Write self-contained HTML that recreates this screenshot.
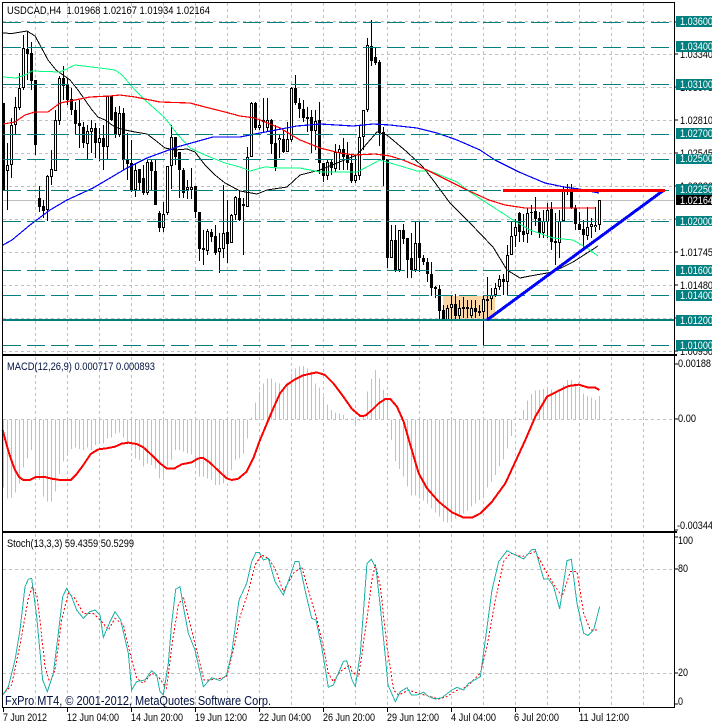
<!DOCTYPE html>
<html><head><meta charset="utf-8"><style>
html,body{margin:0;padding:0;background:#fff}
svg{display:block}
text{font-family:"Liberation Sans",sans-serif;font-size:11px;fill:#000}
.c{shape-rendering:crispEdges;fill:none}
</style></head><body>
<svg width="712" height="725" viewBox="0 0 712 725" xmlns="http://www.w3.org/2000/svg">
<rect width="712" height="725" fill="#fff"/>
<rect x="443" y="296" width="52" height="24" fill="#fad7a4" class="c" style="fill:#fad7a4"/>
<g class="c" stroke="#c0c0c0" stroke-dasharray="3 3">
<path d="M35.5 3V354M67.5 3V354M99.5 3V354M131.5 3V354M163.5 3V354M195.5 3V354M227.5 3V354M259.5 3V354M291.5 3V354M323.5 3V354M355.5 3V354M387.5 3V354M419.5 3V354M451.5 3V354M483.5 3V354M515.5 3V354M547.5 3V354M579.5 3V354M611.5 3V354M643.5 3V354"/>
<path d="M35.5 357V531M67.5 357V531M99.5 357V531M131.5 357V531M163.5 357V531M195.5 357V531M227.5 357V531M259.5 357V531M291.5 357V531M323.5 357V531M355.5 357V531M387.5 357V531M419.5 357V531M451.5 357V531M483.5 357V531M515.5 357V531M547.5 357V531M579.5 357V531M611.5 357V531M643.5 357V531"/>
<path d="M35.5 534V707M67.5 534V707M99.5 534V707M131.5 534V707M163.5 534V707M195.5 534V707M227.5 534V707M259.5 534V707M291.5 534V707M323.5 534V707M355.5 534V707M387.5 534V707M419.5 534V707M451.5 534V707M483.5 534V707M515.5 534V707M547.5 534V707M579.5 534V707M611.5 534V707M643.5 534V707"/>
<path d="M3 21.5H674M3 54.5H674M3 87.5H674M3 120.5H674M3 153.5H674M3 186.5H674M3 219.5H674M3 252.5H674M3 285.5H674M3 318.5H674M3 351.5H674M3 419.5H674M3 569.5H674M3 673.5H674"/>
</g>
<path class="c" stroke="#c0c0c0" d="M3 200.5H674"/>

<g class="c" transform="translate(.5,0)" stroke="#000">
<path stroke-width="1" d="M3 103V190M7 143V210M11 118V178M15 97V135M19 73V110M23 35V90M27 31V80M31 42V90M35 80V155M39 186V212M43 200V218M47 175V221M51 150V185M55 110V171M59 76V125M63 66V100M67 78V105M71 88V115M75 102V135M79 100V148M83 122V148M87 125V159M91 120V153M95 123V158M99 128V161M103 125V170M107 96V160M111 96V121M115 107V138M119 106V137M123 108V170M127 133V180M131 140V192M135 164V197M139 169V190M143 165V195M147 160V195M151 160V190M155 160V205M159 211V232M163 202V232M167 166V215M171 125V189M175 137V165M179 152V198M183 168V198M187 180V199M191 168V199M195 186V218M199 212V261M203 230V265M207 229V255M211 229V242M215 225V255M219 233V273M223 185V258M227 200V263M231 214V243M235 196V220M239 190V221M243 198V255M247 147V207M251 102V157M255 102V130M259 120V130M263 98V132M267 98V132M271 119V154M275 125V171M279 135V158M283 130V153M287 122V152M291 87V142M295 75V105M299 98V118M303 100V122M307 107V132M311 110V153M315 110V150M319 102V174M323 163V182M327 160V180M331 160V175M335 144V172M339 145V170M343 138V170M347 142V170M351 155V183M355 156V183M359 125V180M363 110V150M367 38V112M371 20V66M375 47V65M379 60V146M383 127V186M387 159V268M391 225V258M395 225V272M399 230V272M403 224V244M407 238V278M411 233V278M415 221V272M419 221V272M423 255V265M427 258V282M431 262V296M435 286V298M439 285V320M443 305V320M447 305V320M451 296V320M455 294V320M459 300V320M463 297V318M467 300V318M471 300V318M475 300V318M479 305V316M483 295V346M487 277V318M491 288V310M495 283V297M499 275V290M503 274V295M507 245V296M511 222V255M515 219V247M519 212V242M523 214V242M527 208V243M531 205V235M535 197V226M539 212V238M543 210V238M547 203V238M551 202V250M555 213V265M559 210V258M563 186V222M567 184V195M571 184V209M575 205V230M579 212V230M583 220V250M587 207V240M591 218V238M595 207V232M599 200V230"/>
<path stroke-width="3" d="M3 103V190M7 165V171M11 125V165M15 107V125M19 88V108M23 48V88M27 49V54M31 53V81M35 80V145M39 198V207M43 206V211M47 176V210M51 169V177M55 120V171M59 78V121M63 78V86M67 84V100M71 99V110M75 110V124M79 123V126M83 127V143M87 131V144M91 128V132M95 128V143M99 138V143M103 138V147M107 96V147M111 96V120M115 112V135M119 113V135M123 113V160M127 159V164M131 163V190M135 170V190M139 169V183M143 178V193M147 162V193M151 162V171M155 171V205M159 213V228M163 214V228M167 166V213M171 137V166M175 137V157M179 152V170M183 170V193M187 187V190M191 187V190M195 186V212M199 212V249M203 248V250M207 231V251M211 232V237M215 236V253M219 248V252M223 233V249M227 232V244M231 215V243M235 197V215M239 198V220M243 204V206M247 157V207M251 103V157M255 103V128M259 125V128M263 120V122M267 120V128M271 120V144M275 143V167M279 138V140M283 139V152M287 139V152M291 88V140M295 88V103M299 103V109M303 109V118M307 117V119M311 117V131M315 121V131M319 120V163M323 163V176M327 162V176M331 162V168M335 152V169M339 149V153M343 149V157M347 155V163M351 163V181M355 175V181M359 137V176M363 110V137M367 45V110M371 46V61M375 57V63M379 62V133M383 132V160M387 159V258M391 240V258M395 240V270M399 230V270M403 230V239M407 238V260M411 258V270M415 243V270M419 243V258M423 258V262M427 262V274M431 274V288M435 287V289M439 289V311M443 310V320M447 308V320M451 304V308M455 304V316M459 308V316M463 307V309M467 307V309M471 308V316M475 308V312M479 311V313M483 299V312M487 299V301M491 295V299M495 288V295M499 279V287M503 279V282M507 255V282M511 236V255M515 227V236M519 213V232M523 231V235M527 213V234M531 212V213M535 211V219M539 218V233M543 221V233M547 210V222M551 209V242M555 241V243M559 221V243M563 190V221M567 189V192M571 189V208M575 208V224M579 224V230M583 229V235M587 227V236M591 224V227M595 225V227M599 200V225"/>
<path stroke="#fff" stroke-width="1" d="M7 166V170M11 126V164M15 108V124M19 89V107M23 49V87M47 177V209M51 170V176M55 121V170M59 79V120M87 132V143M91 129V131M99 139V142M107 97V146M119 114V134M135 171V189M147 163V192M163 215V227M167 167V212M171 138V165M187 188V189M191 188V189M207 232V250M219 249V251M223 234V248M231 216V242M235 198V214M247 158V206M251 104V156M259 126V127M267 121V127M279 139V139.9M287 140V151M291 89V139M315 122V130M327 163V175M335 153V168M339 150V152M355 176V180M359 138V175M363 111V136M367 46V109M391 241V257M399 231V269M415 244V269M447 309V319M451 305V307M459 309V315M471 309V315M483 300V311M491 296V298M495 289V294M499 280V286M507 256V281M511 237V254M515 228V235M527 214V233M543 222V232M547 211V221M559 222V242M563 191V220M567 190V191M587 228V235M591 225V226M595 226V226.9M599 201V224"/>
</g>

<g class="c" stroke-width="1">
<path stroke="#000" d="M3 33L12 33.5L27 31L35 36L40 45L48 60L56 70L63 75L70 80L78 90L85 100L92 110L98 117L105 120L115 127L125 130L135 132L147 134L155 140L165 148L175 150L187 149L195 152L205 165L215 175L225 183L240 191L257 194L267 190L287 187L300 175L320 170L337 163L357 155L377 132L387 135L407 152L423 167L433 180L450 203L470 223L493 247L507 270L520 278L530 276L553 272L573 262L598 246"/>
<path stroke="#00ff7f" d="M3 77L16 78L25 75L32 71L60 72L75 65L100 68L115 70L122 75L135 90L145 100L165 118L178 135L190 148L205 155L225 163L240 167L250 171L265 167L280 168L300 168L320 172L345 172L357 172L380 160L397 165L417 171L430 171L457 182L470 192L490 205L513 220L530 230L553 238L573 240L587 248L598 256"/>
<path stroke="#ff0000" stroke-width="1.2" d="M3 124L15 122L25 115L35 112L48 112L60 103L75 100L90 97L110 96L120 95L135 97L160 102L190 103L205 107L225 112L240 116L255 118L280 128L300 140L320 148L340 153L355 155L375 154L390 156L403 160L427 170L467 190L489 200L505 205L525 208L572 208L595 208"/>
<path stroke="#0000ff" stroke-width="1.2" d="M3 245L12 240L30 225L50 210L67 200L93 188L127 168L147 158L177 147L213 137L240 137L260 133L297 126L320 124L353 126L373 124L390 125L417 128L437 133L457 140L480 150L495 160L519 172L545 183L564 187L579 189L599 193"/>
</g>

<g class="c" stroke="#008080" stroke-dasharray="18 6">
<path d="M3 22.5H674M3 47.5H674M3 84.5H674M3 134.5H674M3 159.5H674M3 190.5H674M3 221.5H674M3 270.5H674M3 295.5H674M3 345.5H674"/>
</g>
<rect x="3" y="319" width="671" height="2" fill="#008080"/>
<path class="c" stroke="#0000ff" stroke-width="3" d="M487 320L664 190"/>
<rect x="503" y="189" width="162" height="3" fill="#ff0000"/>

<g class="c" transform="scale(.33333) translate(0,1050)" stroke="#c0c0c0" stroke-width="3">
<path d="M10 208V412M22 208V445M34 208V443M46 208V428M58 208V400M70 208V352M82 208V325M94 208V300M106 208V390M118 208V390M130 208V440M142 208V455M154 208V455M166 208V425M178 208V372M190 208V335M202 208V310M214 208V297M226 208V293M238 208V297M250 208V300M262 208V293M274 208V300M286 208V285M298 208V278M310 208V280M322 208V265M334 208V262M346 208V250M358 208V247M370 208V262M382 208V280M394 208V290M406 208V325M418 208V330M430 208V350M442 208V340M454 208V345M466 208V355M478 208V385M490 208V380M502 208V350M514 208V330M526 208V300M538 208V300M550 208V305M562 208V310M574 208V313M586 208V345M598 208V380M610 208V380M622 208V385M634 208V390M646 208V405M658 208V405M670 208V400M682 208V390M694 208V360M706 208V330M718 208V325M730 208V310M742 208V265M754 208V203M766 208V158M778 208V125M790 208V100M802 208V85M814 208V85M826 208V97M838 208V100M850 208V115M862 208V97M874 208V70M886 208V55M898 208V50M910 208V48M922 208V55M934 208V65M946 208V100M958 208V112M970 208V140M982 208V163M994 208V180M1006 208V187M1018 208V190M1030 208V195M1042 208V205M1054 208V205"/>
<g transform="translate(1056,0)"><path d="M10 208V225M22 208V213M34 208V200M46 208V125M58 208V87M70 208V60M82 208V85M94 208V120M106 208V145M118 208V270M130 208V333M142 208V357M154 208V380M166 208V410M178 208V437M190 208V437M202 208V445M214 208V452M226 208V460M238 208V475M250 208V487M262 208V500M274 208V515M286 208V518M298 208V510M310 208V505M322 208V497M334 208V490M346 208V483M358 208V470M370 208V460M382 208V450M394 208V440M406 208V412M418 208V395M430 208V375M442 208V350M454 208V328M466 208V295M478 208V258M502 208V205M514 208V180M526 208V152M538 208V132M550 208V122M562 208V120M574 208V117M586 208V115M598 208V118M610 208V125M622 208V120M634 208V105M646 208V90M658 208V90M670 208V100M682 208V118M694 208V130M706 208V138M718 208V142M730 208V150M742 208V138"/></g>
</g>
<g class="c" stroke="#ff0000" stroke-width="6" transform="scale(.33333) translate(0,1050)">
<path d="M8 240L20 285L32 325L45 360L58 382L70 390L90 390L108 381L135 381L155 386L180 390L212 390L230 372L250 345L272 312L295 298L320 295L345 290L365 281L385 278L410 282L430 292L455 315L480 340L500 355L522 356L545 343L575 337L595 325L610 324L630 338L655 362L680 385L695 390L715 386L740 365L760 325L780 270L800 222L820 175L840 130L860 105L885 88L910 76L950 67L975 75L1000 100L1030 140L1056 177L1081 198L1096 197L1116 180L1136 160L1156 147L1171 147L1191 170L1211 215L1231 285L1256 370L1281 415L1316 455L1356 487L1391 503L1416 503L1441 490L1476 455L1516 400L1546 335L1576 270L1606 200L1641 140L1676 122L1706 108L1736 104L1766 113L1786 113L1798 120"/>
</g>
<g class="c" transform="scale(.33333) translate(0,1590)" stroke-width="3">
<path stroke="#ff0000" stroke-dasharray="6 6" d="M8 495L35 465L60 345L85 205L97 170L110 195L122 290L135 410L150 460L165 420L185 270L205 190L225 205L250 250L280 250L305 275L325 300L345 265L370 285L390 370L410 445L430 460L455 430L475 440L500 475L515 350L535 225L550 200L570 280L590 360L612 450L630 450L660 445L680 440L700 360L720 260L745 185L765 105L785 75L805 85L825 115L850 185L880 130L905 110L925 180L950 265L970 350L985 430L1000 455L1020 425L1050 405L1056 425L1076 440L1096 300L1116 150L1126 103L1141 170L1161 350L1181 480L1196 495L1226 480L1246 487L1281 497L1316 507L1341 500L1366 483L1401 470L1441 430L1461 350L1486 210L1511 95L1531 70L1566 80L1606 65L1641 130L1666 170L1686 200L1711 125L1731 125L1751 250L1771 300L1791 300"/>
<path stroke="#20b2aa" d="M8 495L25 470L45 390L60 300L75 170L85 148L95 145L110 260L128 450L142 485L160 430L175 310L188 200L200 175L215 200L230 240L250 265L270 245L285 240L300 255L310 322L330 275L345 245L362 270L385 370L395 480L410 455L435 450L455 422L470 435L480 485L490 495L505 400L515 280L527 178L540 170L550 230L565 310L585 360L610 470L635 443L660 452L680 435L695 370L717 210L740 160L755 95L768 67L778 67L790 90L805 85L825 155L850 195L870 140L885 95L897 95L915 180L935 265L948 270L965 350L985 472L1000 465L1030 395L1040 392L1056 450L1066 470L1081 370L1101 100L1114 88L1128 115L1141 230L1156 380L1164 465L1186 515L1201 485L1221 473L1234 495L1251 495L1271 487L1286 500L1306 507L1326 503L1356 480L1371 472L1391 480L1406 460L1441 440L1456 330L1476 180L1496 95L1521 62L1546 75L1571 87L1596 58L1606 58L1631 147L1646 147L1661 170L1679 237L1701 92L1714 88L1731 220L1751 310L1764 316L1781 300L1799 230"/>
</g>

<g fill="#000" class="c" style="fill:#000">
<rect x="2" y="2" width="673" height="1" style="fill:#000"/>
<rect x="2" y="2" width="1" height="706" style="fill:#000"/>
<rect x="674" y="2" width="1" height="706" style="fill:#000"/>
<rect x="2" y="354" width="675" height="2" style="fill:#000"/>
<rect x="2" y="531" width="675" height="2" style="fill:#000"/>
<rect x="2" y="707" width="673" height="1" style="fill:#000"/>
</g>
<path class="c" stroke="#000" d="M675 22H678M675 54H678M675 87H678M675 120H678M675 153H678M675 186H678M675 219H678M675 252H678M675 285H678M675 318H678M675 351H678M675 364H678M675 419H678M675 530H678M675 537H678M675 569H678M675 673H678M675 704H678M3.5 708V712M67.5 708V712M131.5 708V712M195.5 708V712M259.5 708V712M323.5 708V712M387.5 708V712M451.5 708V712M515.5 708V712M579.5 708V712"/>

<text x="7" y="14" textLength="203" lengthAdjust="spacingAndGlyphs" xml:space="preserve">USDCAD,H4  1.01968 1.02167 1.01934 1.02164</text>
<text x="7" y="370" textLength="148" lengthAdjust="spacingAndGlyphs" style="fill:#001040">MACD(12,26,9) 0.000717 0.000893</text>
<text x="7" y="547" textLength="127" lengthAdjust="spacingAndGlyphs">Stoch(13,3,3) 59.4359 50.5299</text>
<text x="5" y="705" textLength="266" lengthAdjust="spacingAndGlyphs" style="font-size:13px;fill:#001040">FxPro MT4, © 2001-2012, MetaQuotes Software Corp.</text>

<text x="680" y="58" textLength="33" lengthAdjust="spacingAndGlyphs">1.03340</text>
<text x="680" y="91" textLength="33" lengthAdjust="spacingAndGlyphs">1.03075</text>
<text x="680" y="124" textLength="33" lengthAdjust="spacingAndGlyphs">1.02810</text>
<text x="680" y="157" textLength="33" lengthAdjust="spacingAndGlyphs">1.02545</text>
<text x="680" y="190" textLength="33" lengthAdjust="spacingAndGlyphs">1.02280</text>
<text x="680" y="256" textLength="33" lengthAdjust="spacingAndGlyphs">1.01745</text>
<text x="680" y="289" textLength="33" lengthAdjust="spacingAndGlyphs">1.01480</text>
<text x="680" y="355" textLength="33" lengthAdjust="spacingAndGlyphs">1.00950</text>

<g fill="#008080" style="shape-rendering:crispEdges">
<rect x="676" y="16" width="36" height="11"/>
<rect x="676" y="41" width="36" height="11"/>
<rect x="676" y="79" width="36" height="11"/>
<rect x="676" y="128" width="36" height="11"/>
<rect x="676" y="154" width="36" height="10"/>
<rect x="676" y="184" width="36" height="11"/>
<rect x="676" y="216" width="36" height="10"/>
<rect x="676" y="265" width="36" height="11"/>
<rect x="676" y="290" width="36" height="11"/>
<rect x="676" y="315" width="36" height="11"/>
<rect x="676" y="340" width="36" height="11"/>
</g>
<rect x="676" y="195" width="36" height="10" fill="#000"/>
<g>
<text x="680" y="25" textLength="33" lengthAdjust="spacingAndGlyphs" style="fill:#fff">1.03600</text>
<text x="680" y="50" textLength="33" lengthAdjust="spacingAndGlyphs" style="fill:#fff">1.03400</text>
<text x="680" y="88" textLength="33" lengthAdjust="spacingAndGlyphs" style="fill:#fff">1.03100</text>
<text x="680" y="137" textLength="33" lengthAdjust="spacingAndGlyphs" style="fill:#fff">1.02700</text>
<text x="680" y="162" textLength="33" lengthAdjust="spacingAndGlyphs" style="fill:#fff">1.02500</text>
<text x="680" y="193" textLength="33" lengthAdjust="spacingAndGlyphs" style="fill:#fff">1.02250</text>
<text x="680" y="204" textLength="33" lengthAdjust="spacingAndGlyphs" style="fill:#fff">1.02164</text>
<text x="680" y="225" textLength="33" lengthAdjust="spacingAndGlyphs" style="fill:#fff">1.02000</text>
<text x="680" y="274" textLength="33" lengthAdjust="spacingAndGlyphs" style="fill:#fff">1.01600</text>
<text x="680" y="299" textLength="33" lengthAdjust="spacingAndGlyphs" style="fill:#fff">1.01400</text>
<text x="680" y="324" textLength="33" lengthAdjust="spacingAndGlyphs" style="fill:#fff">1.01200</text>
<text x="680" y="349" textLength="33" lengthAdjust="spacingAndGlyphs" style="fill:#fff">1.01000</text>
</g>

<text x="678" y="367" textLength="33" lengthAdjust="spacingAndGlyphs">0.00188</text>
<text x="678" y="422" textLength="18" lengthAdjust="spacingAndGlyphs">0.00</text>
<text x="677" y="529" textLength="36" lengthAdjust="spacingAndGlyphs">-0.00344</text>
<text x="678" y="544" textLength="15" lengthAdjust="spacingAndGlyphs">100</text>
<text x="678" y="572" textLength="10" lengthAdjust="spacingAndGlyphs">80</text>
<text x="678" y="676" textLength="10" lengthAdjust="spacingAndGlyphs">20</text>
<text x="678" y="705" textLength="5" lengthAdjust="spacingAndGlyphs">0</text>

<text x="3" y="721" textLength="44" lengthAdjust="spacingAndGlyphs">7 Jun 2012</text>
<text x="67" y="721" textLength="52" lengthAdjust="spacingAndGlyphs">12 Jun 04:00</text>
<text x="131" y="721" textLength="52" lengthAdjust="spacingAndGlyphs">14 Jun 20:00</text>
<text x="195" y="721" textLength="52" lengthAdjust="spacingAndGlyphs">19 Jun 12:00</text>
<text x="259" y="721" textLength="52" lengthAdjust="spacingAndGlyphs">22 Jun 04:00</text>
<text x="323" y="721" textLength="52" lengthAdjust="spacingAndGlyphs">26 Jun 20:00</text>
<text x="387" y="721" textLength="52" lengthAdjust="spacingAndGlyphs">29 Jun 12:00</text>
<text x="451" y="721" textLength="45" lengthAdjust="spacingAndGlyphs">4 Jul 04:00</text>
<text x="514" y="721" textLength="45" lengthAdjust="spacingAndGlyphs">6 Jul 20:00</text>
<text x="579" y="721" textLength="50" lengthAdjust="spacingAndGlyphs">11 Jul 12:00</text>
</svg>
</body></html>
